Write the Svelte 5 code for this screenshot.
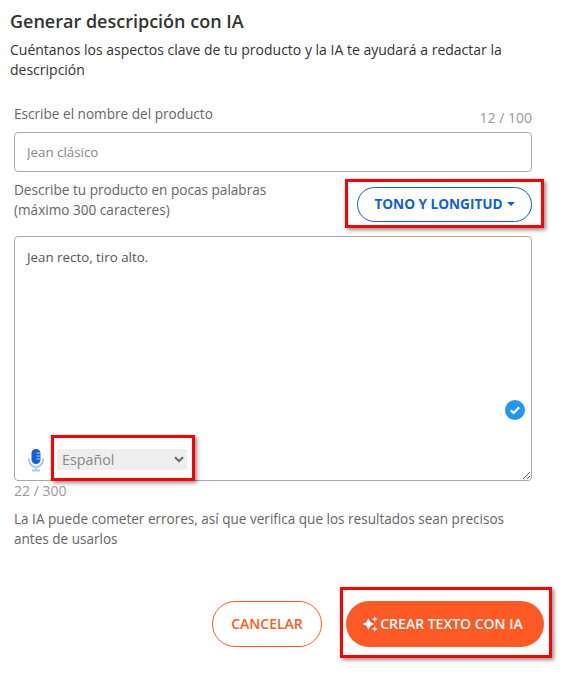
<script>
    let name = "Jean clásico";
    let description = "Jean recto, tiro alto.";
    let language = "Español";
</script>

<div class="page">
    <h1>Generar descripción con IA</h1>
    <p class="intro">Cuéntanos los aspectos clave de tu producto y la IA te ayudará a redactar la descripción</p>

    <div class="form">
        <div class="name-row">
            <label for="name">Escribe el nombre del producto</label>
            <span class="counter">12 / 100</span>
        </div>
        <input id="name" class="name-input" type="text" bind:value={name} />

        <div class="desc-row">
            <label for="desc">Describe tu producto en pocas palabras<br />(máximo 300 caracteres)</label>
            <button class="tone"><span class="label">TONO Y LONGITUD</span><span class="caret"></span></button>
        </div>

        <div class="desc-box">
            <textarea id="desc" bind:value={description}></textarea>
            <span class="check">
                <svg viewBox="0 0 20 20" width="20" height="20">
                    <circle cx="10" cy="10" r="10" fill="#2196f3" />
                    <path d="M5.8 10.3l2.8 2.7 5.6-5.6" fill="none" stroke="#fff" stroke-width="2.2" />
                </svg>
            </span>
            <div class="lang">
                <svg class="mic" viewBox="0 0 18 24" width="18" height="24">
                    <path d="M2 10.5v1.5a7 7 0 0 0 14 0v-1.5" fill="none" stroke="#a9c8f5" stroke-width="2" />
                    <path d="M9 18v4M5 22.5h8" fill="none" stroke="#a9c8f5" stroke-width="1.8" />
                    <rect x="4.5" y="1" width="9" height="15" rx="4.5" fill="#0f62e0" />
                    <path d="M9.5 5h4M9.5 8h4M9.5 11h4" stroke="#a9c8f5" stroke-width="1" />
                </svg>
                <div class="select-wrap">
                    <select bind:value={language}>
                        <option>Español</option>
                        <option>English</option>
                    </select>
                    <svg class="chevron" viewBox="0 0 10 7" width="10" height="7">
                        <path d="M1 1.2l4 4 4-4" fill="none" stroke="#666" stroke-width="2" />
                    </svg>
                </div>
            </div>
        </div>
        <div class="desc-count">22 / 300</div>
        <p class="disclaimer">La IA puede cometer errores, así que verifica que los resultados sean precisos antes de usarlos</p>
    </div>

    <div class="actions">
        <button class="cancel"><span class="label">CANCELAR</span></button>
        <button class="create">
            <svg viewBox="0 0 16 16" width="16" height="16">
                <path fill="#fff" d="M6.5 2l1.9 4.1 4.1 1.9-4.1 1.9-1.9 4.1-1.9-4.1L.5 8l4.1-1.9zM12.8 0l.9 2.2 2.2.9-2.2.9-.9 2.2-.9-2.2-2.2-.9 2.2-.9zM12.8 9.8l.9 2.2 2.2.9-2.2.9-.9 2.2-.9-2.2-2.2-.9 2.2-.9z" />
            </svg>
            <span class="label">CREAR TEXTO CON IA</span>
        </button>
    </div>

    <div class="mark mark-tone"></div>
    <div class="mark mark-lang"></div>
    <div class="mark mark-create"></div>
</div>

<style>
    :global(body) {
        background: #fff;
    }

    .page {
        position: relative;
        width: 563px;
        height: 673px;
        box-sizing: border-box;
        padding: 9px 10px 0;
        overflow: hidden;
        font-family: "Open Sans", sans-serif;
        color: #666;
    }

    h1 {
        margin: 0;
        font-size: 18px;
        line-height: 24px;
        font-weight: 600;
        color: #333;
    }

    .intro {
        margin: 7px 0 0;
        width: 520px;
        font-size: 14px;
        line-height: 20px;
        color: #333;
    }

    .form {
        margin: 0 0 0 4px;
        width: 518px;
    }

    .name-row {
        display: flex;
        justify-content: space-between;
        margin-top: 24px;
        height: 28px;
        font-size: 13.6px;
        line-height: 20px;
    }

    .counter {
        margin-top: 4px;
        font-size: 14px;
        color: #999;
    }

    .name-input {
        display: block;
        box-sizing: border-box;
        width: 100%;
        height: 40px;
        padding: 0 12px;
        border: 1px solid #aaa;
        border-radius: 4px;
        font: inherit;
        font-size: 13.33px;
        color: #888;
        outline: none;
    }

    .desc-row {
        display: flex;
        justify-content: space-between;
        align-items: flex-start;
        height: 64px;
        font-size: 13.6px;
        line-height: 20px;
        padding-top: 8px;
        box-sizing: border-box;
    }

    .label {
        position: relative;
        top: -1px;
    }

    .tone {
        display: flex;
        align-items: center;
        justify-content: center;
        width: 175px;
        height: 35px;
        margin-top: 7px;
        padding: 0;
        background: #fff;
        border: 1px solid #0f5fd8;
        border-radius: 18px;
        font: inherit;
        font-size: 13.6px;
        font-weight: 700;
        color: #0f5fd8;
    }

    .caret {
        margin: -2px 0 0 4px;
        border-left: 4px solid transparent;
        border-right: 4px solid transparent;
        border-top: 4px solid #0f5fd8;
    }

    .desc-box {
        position: relative;
        height: 245px;
    }

    textarea {
        display: block;
        box-sizing: border-box;
        width: 100%;
        height: 100%;
        padding: 10px 12px;
        border: 1px solid #aaa;
        border-radius: 4px;
        font: inherit;
        font-size: 13.33px;
        line-height: 20px;
        color: #555;
        outline: none;
        resize: vertical;
    }

    .check {
        position: absolute;
        right: 7px;
        top: 164px;
        height: 20px;
    }

    .lang {
        position: absolute;
        left: 13px;
        top: 212px;
        display: flex;
        align-items: flex-start;
    }

    .mic {
        display: block;
    }

    .select-wrap {
        position: relative;
        margin: 1px 0 0 12px;
    }

    select {
        display: block;
        width: 130px;
        height: 21px;
        padding: 0 0 0 5px;
        border: 0;
        border-radius: 0;
        background: #eee;
        appearance: none;
        font: inherit;
        font-size: 14.3px;
        color: #888;
    }

    .chevron {
        position: absolute;
        right: 3px;
        top: 7px;
    }

    .desc-count {
        font-size: 14px;
        line-height: 20px;
        color: #999;
    }

    .disclaimer {
        margin: 8px 0 0;
        font-size: 13.55px;
        line-height: 20px;
    }

    .actions {
        display: flex;
        justify-content: flex-end;
        gap: 24px;
        margin-top: 52px;
        padding-right: 9px;
    }

    .actions button {
        display: flex;
        align-items: center;
        justify-content: center;
        height: 46px;
        padding: 0;
        border-radius: 23px;
        font: inherit;
        font-size: 14px;
        font-weight: 600;
    }

    .cancel {
        width: 110px;
        background: #fff;
        border: 1px solid #ff5a26;
        color: #ff5a26;
    }

    .create {
        width: 198px;
        gap: 2px;
        background: #ff5a26;
        border: 0;
        color: #fff;
    }

    .create svg {
        margin-left: -5px;
    }

    .mark {
        position: absolute;
        box-sizing: border-box;
        border: 3px solid #f00;
        box-shadow: 2px 2px 4px rgba(0, 0, 0, 0.45);
        pointer-events: none;
    }

    .mark-tone {
        left: 345px;
        top: 179px;
        width: 199px;
        height: 49px;
    }

    .mark-lang {
        left: 51px;
        top: 435px;
        width: 144px;
        height: 46px;
    }

    .mark-create {
        left: 340px;
        top: 587px;
        width: 212px;
        height: 71px;
    }
</style>
